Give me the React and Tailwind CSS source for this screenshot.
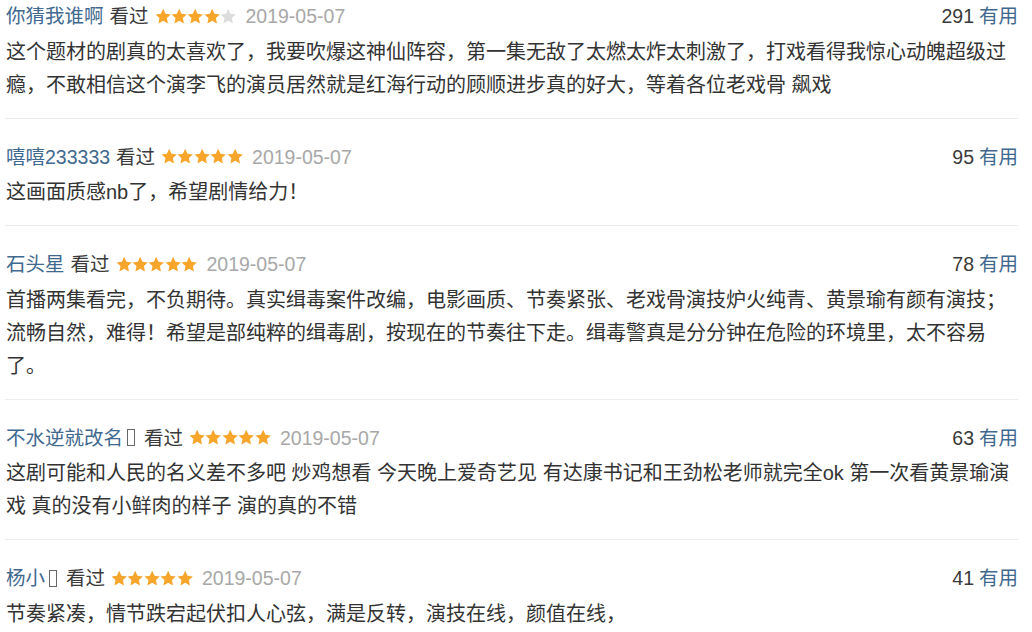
const comments = [
  {
    name: '你猜我谁啊',
    tofu: false,
    stars: 4,
    date: '2019-05-07',
    votes: 291,
    text: '这个题材的剧真的太喜欢了，我要吹爆这神仙阵容，第一集无敌了太燃太炸太刺激了，打戏看得我惊心动魄超级过瘾，不敢相信这个演李飞的演员居然就是红海行动的顾顺进步真的好大，等着各位老戏骨 飙戏',
  },
  {
    name: '嘻嘻233333',
    tofu: false,
    stars: 5,
    date: '2019-05-07',
    votes: 95,
    text: '这画面质感nb了，希望剧情给力！',
  },
  {
    name: '石头星',
    tofu: false,
    stars: 5,
    date: '2019-05-07',
    votes: 78,
    text: '首播两集看完，不负期待。真实缉毒案件改编，电影画质、节奏紧张、老戏骨演技炉火纯青、黄景瑜有颜有演技；流畅自然，难得！希望是部纯粹的缉毒剧，按现在的节奏往下走。缉毒警真是分分钟在危险的环境里，太不容易了。',
  },
  {
    name: '不水逆就改名',
    tofu: true,
    stars: 5,
    date: '2019-05-07',
    votes: 63,
    text: '这剧可能和人民的名义差不多吧 炒鸡想看 今天晚上爱奇艺见 有达康书记和王劲松老师就完全ok 第一次看黄景瑜演戏 真的没有小鲜肉的样子 演的真的不错',
  },
  {
    name: '杨小',
    tofu: true,
    stars: 5,
    date: '2019-05-07',
    votes: 41,
    text: '节奏紧凑，情节跌宕起伏扣人心弦，满是反转，演技在线，颜值在线，',
  },
]

function Star({ on }) {
  return (
    <svg width="16.4" height="17" viewBox="0 0 24 24" className="shrink-0">
      <path
        d="M12 .8l3.4 7.2 7.8.9-5.8 5.4 1.6 7.8L12 18.2 5 22.1l1.6-7.8L.8 8.9l7.8-.9z"
        fill={on ? '#f7a52b' : '#dddddd'}
      />
    </svg>
  )
}

function Comment({ c, last }) {
  return (
    <div className={`pt-[22px] ${last ? '' : 'pb-[16px] border-b border-[#ececec]'}`}>
      {/* header */}
      <div className="flex items-center justify-between h-[32px] text-[19.5px] leading-[32px]">
        <div className="flex items-center pl-[1px]">
          <span className="text-[#41698f] flex items-center">
            {c.name}
            {c.tofu && (
              <span className="inline-block w-[8px] h-[17px] border border-[#666] ml-[4px] mr-[3px]"></span>
            )}
          </span>
          <span className="text-[#3a3a3a] ml-[6px]">看过</span>
          <span className="flex ml-[6px]">
            {[0, 1, 2, 3, 4].map((i) => (
              <Star key={i} on={i < c.stars} />
            ))}
          </span>
          <span className="text-[#a8a8a8] ml-[9px]">{c.date}</span>
        </div>
        <div>
          <span className="text-[#3a3a3a]">{c.votes}</span>
          <span className="text-[#41698f] ml-[5px]">有用</span>
        </div>
      </div>
      {/* body */}
      <p className="mt-[3.5px] pl-[1px] text-[20px] leading-[33px] text-[#333]">{c.text}</p>
    </div>
  )
}

export default function App() {
  return (
    <div
      className="w-[1032px] h-[632px] overflow-hidden bg-white"
      style={{ fontFamily: '"Liberation Sans", "Noto Sans CJK SC", sans-serif' }}
    >
      <div className="ml-[5px] w-[1013px] -mt-[22px]">
        {comments.map((c, i) => (
          <Comment key={i} c={c} last={i === comments.length - 1} />
        ))}
      </div>
    </div>
  )
}
